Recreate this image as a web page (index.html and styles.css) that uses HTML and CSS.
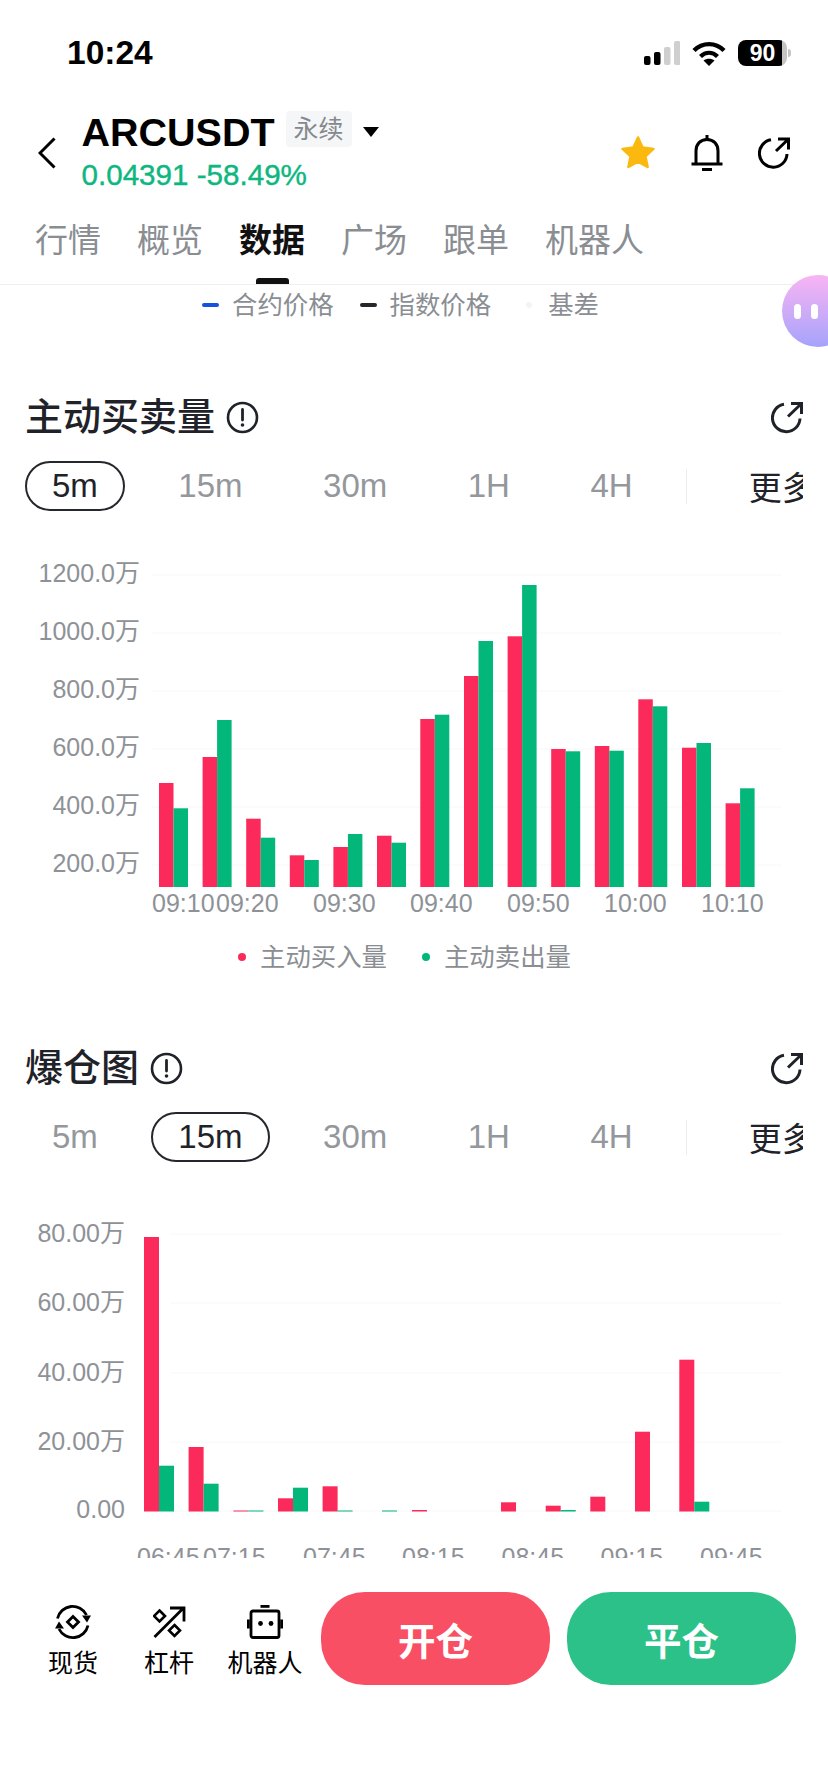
FILE: index.html
```html
<!DOCTYPE html>
<html lang="zh-CN">
<head>
    <meta charset="UTF-8">
    <meta name="viewport" content="width=device-width, initial-scale=1.0">
    <title>ARCUSDT 数据</title>
    <link rel="stylesheet" href="styles.css">
</head>
<body>
    <div class="page">
        <div class="status-bar">
            <span class="time">10:24</span>
            <div class="status-icons">
                <svg class="signal" width="36" height="24" viewBox="0 0 36 24">
                    <rect x="0" y="15" width="6.5" height="9" rx="2" fill="#000"/>
                    <rect x="10" y="11" width="6.5" height="13" rx="2" fill="#000"/>
                    <rect x="20" y="6" width="6.5" height="18" rx="2" fill="#cfcfcf"/>
                    <rect x="30" y="0" width="6.5" height="24" rx="2" fill="#cfcfcf"/>
                </svg>
                <svg class="wifi" width="34" height="25" viewBox="0 0 34 25">
                    <path d="M2 9.5C10.5 1 23.5 1 32 9.5" fill="none" stroke="#000" stroke-width="4.4"/>
                    <path d="M8.5 15.5C13.5 10.5 20.5 10.5 25.5 15.5" fill="none" stroke="#000" stroke-width="4.2"/>
                    <path d="M11.5 19.5C14.5 17 19.5 17 22.5 19.5L17 25Z" fill="#000"/>
                </svg>
                <div class="battery">90</div>
            </div>
        </div>

        <div class="header">
            <svg class="back" width="18" height="32" viewBox="0 0 18 32">
                <path d="M16.5 1.5L2 16L16.5 30.5" fill="none" stroke="#000" stroke-width="3"/>
            </svg>
            <div class="title-block">
                <div class="title-row">
                    <span class="symbol">ARCUSDT</span>
                    <span class="tag">永续</span>
                    <span class="caret"></span>
                </div>
                <div class="price">0.04391 -58.49%</div>
            </div>
            <div class="header-icons">
                <svg width="36" height="35" viewBox="0 0 36 35">
                    <path d="M18 2.5L22.6 12.6L33.5 13.9L25.4 21.3L27.6 32L18 26.6L8.4 32L10.6 21.3L2.5 13.9L13.4 12.6Z" fill="#fbb80f" stroke="#fbb80f" stroke-width="2.5" stroke-linejoin="round"/>
                </svg>
                <svg width="32" height="36" viewBox="0 0 32 36">
                    <path d="M5 29V16C5 9 9.500 4.500 16 4.500C22.500 4.500 27 9 27 16V29" fill="none" stroke="#000" stroke-width="3"/>
                    <path d="M0.500 29H31.500M11 34.500H21" fill="none" stroke="#000" stroke-width="3"/>
                    <path d="M16 0.500V4" fill="none" stroke="#000" stroke-width="3" stroke-linecap="round"/>
                </svg>
                <svg width="32" height="32" viewBox="0 0 32 32">
                    <path d="M13 2.800A13.800 13.800 0 1 0 29 17" fill="none" stroke="#000" stroke-width="3"/>
                    <path d="M18 14L30 2.500M20 2H30.500V12.500" fill="none" stroke="#000" stroke-width="3"/>
                </svg>
            </div>
        </div>

        <div class="tabs">
            <span class="tab">行情</span>
            <span class="tab">概览</span>
            <span class="tab active">数据</span>
            <span class="tab">广场</span>
            <span class="tab">跟单</span>
            <span class="tab">机器人</span>
        </div>

        <div class="bubble"><i></i><i></i></div>

        <div class="content">
            <div class="price-legend">
                <span class="dash blue"></span><span class="legend-text first">合约价格</span>
                <span class="dash dark"></span><span class="legend-text second">指数价格</span>
                <span class="faint-dot"></span><span class="legend-text">基差</span>
            </div>

            <div class="section-head taker-head">
                <h2>主动买卖量</h2>
                <svg class="info" width="33" height="33" viewBox="0 0 33 33">
                    <circle cx="16.500" cy="16.500" r="14.500" fill="none" stroke="#1f2329" stroke-width="2.600"/>
                    <path d="M16.500 8.500V19" stroke="#1f2329" stroke-width="2.800" stroke-linecap="round"/>
                    <circle cx="16.500" cy="24" r="1.800" fill="#1f2329"/>
                </svg>
                <svg class="share" width="32" height="33" viewBox="0 0 32 32">
                    <path d="M13 2.800A13.800 13.800 0 1 0 29 17" fill="none" stroke="#1f2329" stroke-width="3"/>
                    <path d="M17 15L30 2.500M20 2H30.500V12.500" fill="none" stroke="#1f2329" stroke-width="3"/>
                </svg>
            </div>
            <div class="periods">
                <span class="period active">5m</span>
                <span class="period">15m</span>
                <span class="period">30m</span>
                <span class="period">1H</span>
                <span class="period">4H</span>
                <span class="period-line"></span>
                <span class="period-more">更多</span>
            </div>

            <svg class="chart chart-taker" width="828" height="390" viewBox="0 540 828 390">
                <g class="grid">
                    <path d="M152 575H782M152 633H782M152 691H782M152 749H782M152 807H782M152 865H782"/>
                </g>
                <g class="axis-y">
                    <text x="140" y="582">1200.0万</text>
                    <text x="140" y="640">1000.0万</text>
                    <text x="140" y="698">800.0万</text>
                    <text x="140" y="756">600.0万</text>
                    <text x="140" y="814">400.0万</text>
                    <text x="140" y="872">200.0万</text>
                </g>
                <g class="buy">
                    <rect x="159" y="783" width="14.500" height="104"/>
                    <rect x="202.600" y="757" width="14.500" height="130"/>
                    <rect x="246.200" y="818.700" width="14.500" height="68.300"/>
                    <rect x="289.800" y="855.300" width="14.500" height="31.700"/>
                    <rect x="333.400" y="847" width="14.500" height="40"/>
                    <rect x="377" y="835.700" width="14.500" height="51.300"/>
                    <rect x="420.300" y="719" width="14.500" height="168"/>
                    <rect x="464" y="676" width="14.500" height="211"/>
                    <rect x="507.600" y="636.300" width="14.500" height="250.700"/>
                    <rect x="551.200" y="749" width="14.500" height="138"/>
                    <rect x="594.800" y="746" width="14.500" height="141"/>
                    <rect x="638.300" y="699.300" width="14.500" height="187.700"/>
                    <rect x="682" y="747.700" width="14.500" height="139.300"/>
                    <rect x="725.600" y="803.300" width="14.500" height="83.700"/>
                </g>
                <g class="sell">
                    <rect x="173.500" y="808.300" width="14.500" height="78.700"/>
                    <rect x="217.100" y="720" width="14.500" height="167"/>
                    <rect x="260.700" y="837.700" width="14.500" height="49.300"/>
                    <rect x="304.300" y="860" width="14.500" height="27"/>
                    <rect x="347.900" y="834" width="14.500" height="53"/>
                    <rect x="391.500" y="842.700" width="14.500" height="44.300"/>
                    <rect x="434.800" y="714.700" width="14.500" height="172.300"/>
                    <rect x="478.500" y="641" width="14.500" height="246"/>
                    <rect x="522.100" y="585" width="14.500" height="302"/>
                    <rect x="565.700" y="751.300" width="14.500" height="135.700"/>
                    <rect x="609.300" y="750.700" width="14.500" height="136.300"/>
                    <rect x="652.800" y="706.300" width="14.500" height="180.700"/>
                    <rect x="696.500" y="743" width="14.500" height="144"/>
                    <rect x="740.100" y="788.300" width="14.500" height="98.700"/>
                </g>
                <g class="axis-x">
                    <text x="152" y="912">09:10</text>
                    <text x="216" y="912">09:20</text>
                    <text x="313" y="912">09:30</text>
                    <text x="410" y="912">09:40</text>
                    <text x="507" y="912">09:50</text>
                    <text x="604" y="912">10:00</text>
                    <text x="701" y="912">10:10</text>
                </g>
            </svg>

            <div class="chart-legend">
                <span class="dot buy-dot"></span><span class="legend-text buy-label">主动买入量</span>
                <span class="dot sell-dot"></span><span class="legend-text">主动卖出量</span>
            </div>

            <div class="section-head liq-head">
                <h2>爆仓图</h2>
                <svg class="info" width="33" height="33" viewBox="0 0 33 33">
                    <circle cx="16.500" cy="16.500" r="14.500" fill="none" stroke="#1f2329" stroke-width="2.600"/>
                    <path d="M16.500 8.500V19" stroke="#1f2329" stroke-width="2.800" stroke-linecap="round"/>
                    <circle cx="16.500" cy="24" r="1.800" fill="#1f2329"/>
                </svg>
                <svg class="share" width="32" height="33" viewBox="0 0 32 32">
                    <path d="M13 2.800A13.800 13.800 0 1 0 29 17" fill="none" stroke="#1f2329" stroke-width="3"/>
                    <path d="M17 15L30 2.500M20 2H30.500V12.500" fill="none" stroke="#1f2329" stroke-width="3"/>
                </svg>
            </div>
            <div class="periods">
                <span class="period">5m</span>
                <span class="period active">15m</span>
                <span class="period">30m</span>
                <span class="period">1H</span>
                <span class="period">4H</span>
                <span class="period-line"></span>
                <span class="period-more">更多</span>
            </div>

            <svg class="chart chart-liq" width="828" height="368" viewBox="0 1190 828 368">
                <g class="grid">
                    <path d="M170 1234H782M170 1303H782M170 1373H782M170 1442H782M170 1511H782"/>
                </g>
                <g class="axis-y">
                    <text x="125" y="1242">80.00万</text>
                    <text x="125" y="1311">60.00万</text>
                    <text x="125" y="1381">40.00万</text>
                    <text x="125" y="1450">20.00万</text>
                    <text x="125" y="1518">0.00</text>
                </g>
                <g class="buy">
                    <rect x="144" y="1237" width="15" height="274.500"/>
                    <rect x="188.600" y="1447" width="15" height="64.500"/>
                    <rect x="233.400" y="1510.500" width="15" height="1"/>
                    <rect x="278" y="1498.300" width="15" height="13.200"/>
                    <rect x="322.600" y="1486.300" width="15" height="25.200"/>
                    <rect x="412" y="1510" width="15" height="1.500"/>
                    <rect x="501" y="1502.300" width="15" height="9.200"/>
                    <rect x="545.700" y="1505.700" width="15" height="5.800"/>
                    <rect x="590.300" y="1496.700" width="15" height="14.800"/>
                    <rect x="635" y="1431.700" width="15" height="79.800"/>
                    <rect x="679.300" y="1359.700" width="15" height="151.800"/>
                </g>
                <g class="sell">
                    <rect x="159" y="1465.700" width="15" height="45.800"/>
                    <rect x="203.600" y="1483.700" width="15" height="27.800"/>
                    <rect x="248.400" y="1510.500" width="15" height="1"/>
                    <rect x="293" y="1487.700" width="15" height="23.800"/>
                    <rect x="337.600" y="1510.500" width="15" height="1"/>
                    <rect x="382" y="1510.500" width="15" height="1"/>
                    <rect x="560.700" y="1510" width="15" height="1.500"/>
                    <rect x="694.300" y="1501.700" width="15" height="9.800"/>
                </g>
                <g class="axis-x">
                    <text x="137" y="1566">06:45</text>
                    <text x="203" y="1566">07:15</text>
                    <text x="303" y="1566">07:45</text>
                    <text x="402" y="1566">08:15</text>
                    <text x="501.500" y="1566">08:45</text>
                    <text x="600.500" y="1566">09:15</text>
                    <text x="700" y="1566">09:45</text>
                </g>
            </svg>
        </div>

        <div class="footer">
            <div class="tool">
                <svg width="36" height="36" viewBox="0 0 36 36">
                    <path d="M2.500 14.500A15.500 15.500 0 0 1 31.500 11M33 21.500A15.500 15.500 0 0 1 4 25" fill="none" stroke="#000" stroke-width="2.800"/>
                    <path d="M27 11.500H36L32 18.500Z" fill="#000"/>
                    <path d="M0 24.500H9L4 17.500Z" fill="#000"/>
                    <path d="M18 12.500L23.500 18L18 23.500L12.500 18Z" fill="none" stroke="#000" stroke-width="2.800"/>
                </svg>
                <span>现货</span>
            </div>
            <div class="tool">
                <svg width="33" height="36" viewBox="0 0 33 33">
                    <path d="M1.500 31.500L30 3M17 2.500H31V16" fill="none" stroke="#000" stroke-width="2.800"/>
                    <path d="M6.500 5L12 10.500L6.500 16L1 10.500Z" fill="none" stroke="#000" stroke-width="2.600"/>
                    <path d="M21.500 19.500L27 25L21.500 30.500L16 25Z" fill="none" stroke="#000" stroke-width="2.600"/>
                </svg>
                <span>杠杆</span>
            </div>
            <div class="tool">
                <svg width="36" height="36" viewBox="0 0 36 34">
                    <rect x="13.500" y="0" width="9" height="2.800" fill="#000"/>
                    <rect x="4" y="6" width="28" height="26.500" rx="2" fill="none" stroke="#000" stroke-width="2.800"/>
                    <rect x="0" y="14.500" width="2.800" height="9" fill="#000"/>
                    <rect x="33.200" y="14.500" width="2.800" height="9" fill="#000"/>
                    <circle cx="13.500" cy="18.500" r="2.400" fill="#000"/>
                    <circle cx="24" cy="18.500" r="2.400" fill="#000"/>
                </svg>
                <span>机器人</span>
            </div>
            <div class="trade-buttons">
                <button class="trade open">开仓</button>
                <button class="trade close">平仓</button>
            </div>
        </div>
    </div>
</body>
</html>
```

FILE: styles.css
```css
* {
    box-sizing: border-box;
}
body {
    margin: 0;
    background-color: #fff;
    font-family: "Liberation Sans", "Noto Sans CJK SC", sans-serif;
}
.page {
    position: relative;
    display: flex;
    flex-direction: column;
    width: 828px;
    height: 1792px;
    overflow: hidden;
    background-color: #fff;
}

/* status bar */
.status-bar {
    display: flex;
    align-items: center;
    justify-content: space-between;
    flex-shrink: 0;
    height: 106px;
    padding: 0 41px 0 67px;
}
.time {
    font-size: 33.5px;
    font-weight: bold;
    color: #000;
}
.status-icons {
    display: flex;
    align-items: center;
    gap: 12px;
}
.battery {
    position: relative;
    width: 49px;
    height: 26px;
    border-radius: 8px;
    background: linear-gradient(90deg, #000 90%, #c4c4c4 90%);
    color: #fff;
    font-size: 23px;
    font-weight: bold;
    line-height: 26px;
    text-align: center;
}
.battery::after {
    content: "";
    position: absolute;
    top: 9px;
    right: -4px;
    width: 3px;
    height: 8px;
    border-radius: 0 3px 3px 0;
    background-color: #c4c4c4;
}

/* header */
.header {
    display: flex;
    align-items: center;
    flex-shrink: 0;
    height: 99px;
    padding: 6px 38px 12px 38px;
}
.back {
    margin-right: 25.5px;
}
.title-row {
    display: flex;
    align-items: center;
    height: 36px;
}
.symbol {
    margin-top: 4px;
    font-size: 39.5px;
    font-weight: bold;
    color: #000;
}
.tag {
    height: 36px;
    margin: 0 0 2px 11px;
    padding: 0 8px;
    border-radius: 4px;
    background-color: #f5f6f7;
    font-size: 25px;
    line-height: 36px;
    color: #85898f;
}
.caret {
    width: 0;
    height: 0;
    margin: 3px 0 0 11px;
    border-left: 8px solid transparent;
    border-right: 8px solid transparent;
    border-top: 10px solid #000;
}
.price {
    margin-top: 9px;
    font-size: 29.6px;
    line-height: 36px;
    color: #0db77f;
    -webkit-text-stroke: 0.4px #0db77f;
}
.header-icons {
    display: flex;
    align-items: center;
    gap: 35px;
    margin-left: auto;
}

/* tabs */
.tabs {
    display: flex;
    gap: 36px;
    flex-shrink: 0;
    height: 80px;
    padding: 16px 0 0 35px;
    border-bottom: 1px solid #eeeff0;
}
.tab {
    position: relative;
    font-size: 33px;
    line-height: 40px;
    color: #8a8e93;
}
.tab.active {
    font-weight: bold;
    color: #111;
}
.tab.active::after {
    content: "";
    position: absolute;
    left: 17px;
    top: 57px;
    width: 33px;
    height: 6px;
    border-radius: 3px 3px 0 0;
    background-color: #111;
}

/* floating helper, sits over the page edge */
.bubble {
    position: absolute;
    left: 782px;
    top: 275px;
    display: flex;
    gap: 10px;
    align-items: center;
    width: 72px;
    height: 72px;
    padding: 0 0 0 12px;
    border-radius: 50%;
    background: linear-gradient(180deg, #f9b4f3, #a5a3fb);
}
.bubble i {
    width: 7px;
    height: 15px;
    border-radius: 4px;
    background-color: #fff;
}

/* scrolling content */
.content {
    flex-shrink: 0;
    height: 1273px;
    overflow: hidden;
}
.price-legend {
    display: flex;
    align-items: center;
    height: 40px;
    padding-left: 202px;
}
.legend-text {
    font-size: 25.4px;
    line-height: 40px;
    color: #8a8e93;
}
.dash {
    width: 17px;
    height: 4px;
    margin-right: 13px;
    border-radius: 2px;
}
.dash.blue {
    background-color: #1652e0;
}
.dash.dark {
    background-color: #24272b;
}
.legend-text.first {
    margin-right: 26px;
}
.legend-text.second {
    margin-right: 35px;
}
.faint-dot {
    width: 6px;
    height: 6px;
    margin-right: 16px;
    border-radius: 50%;
    background-color: #f2f3f4;
}

.section-head {
    display: flex;
    align-items: center;
    height: 40px;
    padding: 0 25px;
}
.section-head h2 {
    margin: 0;
    font-size: 38px;
    font-weight: 500;
    line-height: 40px;
    color: #1f2329;
}
.taker-head {
    margin-top: 72px;
}
.liq-head {
    margin-top: 71px;
}
.info {
    margin-left: 11px;
}
.share {
    margin-left: auto;
}

.periods {
    display: flex;
    align-items: center;
    gap: 26.5px;
    width: 778px;
    height: 50px;
    margin: 24px 0 0 25px;
    overflow: hidden;
}
.period {
    flex-shrink: 0;
    height: 50px;
    padding: 0 25px;
    border: 2px solid transparent;
    border-radius: 25px;
    font-size: 33px;
    line-height: 46px;
    color: #94979c;
}
.period.active {
    border-color: #24272b;
    color: #1f2329;
}
.period-line {
    flex-shrink: 0;
    width: 1px;
    height: 35px;
    background-color: #eceded;
}
.period-more {
    flex-shrink: 0;
    margin-left: 35px;
    font-size: 33px;
    color: #1f2329;
}

/* charts */
.chart {
    display: block;
    font-family: "Liberation Sans", "Noto Sans CJK SC", sans-serif;
}
.chart-taker {
    margin-top: 29px;
}
.chart-liq {
    margin-top: 28px;
}
.grid path {
    fill: none;
    stroke: #f8f8f9;
    stroke-width: 1;
}
.buy rect {
    fill: #fc2a5a;
}
.sell rect {
    fill: #03b67a;
}
.axis-y text {
    fill: #8e9297;
    font-size: 25px;
    text-anchor: end;
}
.axis-x text {
    fill: #8e9297;
    font-size: 25px;
}
.chart-legend {
    display: flex;
    align-items: center;
    height: 40px;
    margin-top: 7px;
    padding-left: 238px;
}
.dot {
    width: 8px;
    height: 8px;
    margin-right: 14px;
    border-radius: 50%;
}
.buy-dot {
    background-color: #fc2a5a;
}
.sell-dot {
    background-color: #03b67a;
}
.buy-label {
    margin-right: 35px;
}

/* footer */
.footer {
    display: flex;
    flex: 1;
    align-items: flex-start;
    padding: 34px 0 0 25px;
    background-color: #fff;
}
.tool {
    display: flex;
    flex-direction: column;
    align-items: center;
    width: 96px;
    padding-top: 12px;
}
.tool span {
    margin-top: 8px;
    font-size: 25px;
    line-height: 30px;
    color: #000;
}
.trade-buttons {
    display: flex;
    gap: 17px;
    margin-left: 8px;
}
.trade {
    width: 229px;
    height: 93px;
    border: none;
    border-radius: 44px;
    font-family: inherit;
    font-size: 37.5px;
    font-weight: bold;
    color: #fff;
}
.trade.open {
    background-color: #f94f64;
}
.trade.close {
    background-color: #2cc188;
}
```
